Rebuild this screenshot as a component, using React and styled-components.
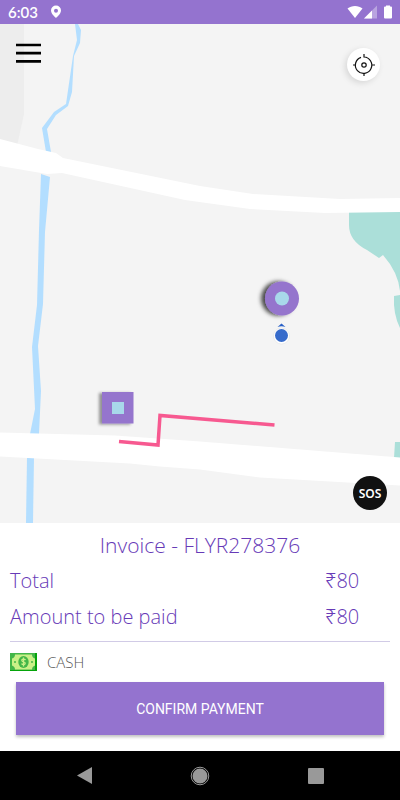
import React from 'react';
import styled, { createGlobalStyle } from 'styled-components';

const GlobalStyle = createGlobalStyle`
  * {
    box-sizing: border-box;
  }

  body {
    margin: 0;
    background: #fff;
    font-family: "Open Sans", "Noto Sans", sans-serif;
  }
`;

const Screen = styled.div`
  display: flex;
  flex-direction: column;
  min-height: 100vh;
`;

const StatusBar = styled.header`
  display: flex;
  align-items: center;
  justify-content: space-between;
  height: 24px;
  padding: 0 8px;
  background: #9473cf;
  color: #fff;
`;

const StatusGroup = styled.div`
  display: flex;
  align-items: center;
  gap: ${({ gap }) => gap};
`;

const Clock = styled.time`
  font-family: Lato, sans-serif;
  font-size: 15px;
  font-weight: 600;
  line-height: 24px;
`;

const MapArea = styled.main`
  position: relative;
  flex: 1;
  min-height: 300px;
  background: #f4f4f4;
`;

const MapCanvas = styled.svg`
  position: absolute;
  width: 100%;
  height: 100%;
`;

const MapButton = styled.button`
  position: absolute;
  display: flex;
  align-items: center;
  justify-content: center;
  width: ${({ size }) => size};
  height: ${({ size }) => size};
  padding: 0;
  border: 0;
  border-radius: 50%;
  background: none;
`;

const MenuButton = styled(MapButton)`
  top: 13px;
  left: 12px;
`;

const LocateButton = styled(MapButton)`
  top: 24px;
  right: 20px;
  background: #fff;
  box-shadow: -2px 2px 6px rgba(0, 0, 0, .12);
`;

const SosButton = styled(MapButton)`
  right: 13px;
  bottom: 13px;
  background: #111;
  color: #fff;
  font-family: "Noto Sans", sans-serif;
  font-size: 12px;
  font-weight: 600;
`;

const Sheet = styled.section`
  padding: 4px 10px 16px;
  background: #fff;
  color: #673ab7;
`;

const Title = styled.h1`
  margin: 0;
  font-size: 21px;
  font-weight: 300;
  line-height: 36px;
  text-align: center;
`;

const Row = styled.div`
  display: flex;
  justify-content: space-between;
  padding-right: 30px;
  font-size: 20px;
  font-weight: 300;
  line-height: 36px;
`;

const Amount = styled.span`
  min-width: 35px;
`;

const Method = styled.div`
  display: flex;
  align-items: center;
  gap: 10px;
  height: 41px;
  margin-top: 6px;
  border-top: 1px solid #d1cbe6;
  color: #555;
  font-size: 15px;
  font-weight: 300;
`;

const ConfirmButton = styled.button`
  display: block;
  width: calc(100% - 12px);
  height: 53px;
  margin: 0 6px;
  padding: 0;
  border: 0;
  background: #9473cf;
  box-shadow: 0 2px 3px rgba(0, 0, 0, .25);
  color: #fff;
  font-family: Roboto, sans-serif;
  font-size: 14px;
`;

const NavBar = styled.nav`
  display: grid;
  grid-template-columns: repeat(3, 116px);
  justify-content: center;
  height: 49px;
  background: #000;
`;

const NavButton = styled.button`
  display: flex;
  align-items: center;
  justify-content: center;
  padding: 0;
  border: 0;
  background: none;
`;

const PinIcon = () => (
  <svg width="12" height="14" viewBox="0 0 12 14">
    <path d="M6 0.5a5 5 0 0 0-5 5C1 9 6 13 6 13s5-4 5-7.500a5 5 0 0 0-5-5zm0 3.200a2 2 0 1 1 0 4 2 2 0 0 1 0-4z" fill="#fff" fillRule="evenodd" />
  </svg>
);

const SignalIcons = () => (
  <svg width="46" height="14" viewBox="0 0 46 14">
    <path d="M1.500 3.500C5.500 0 12.500 0 16.500 3.500L9 13z" fill="#fff" />
    <path d="M31 0.500V13.500H18z" fill="#fff" opacity=".35" />
    <path d="M26 5.500V13.500H18z" fill="#fff" />
    <path d="M40 .5h4v1h1q1 0 1 1v10q0 1-1 1h-6q-1 0-1-1v-10q0-1 1-1h1z" fill="#fff" />
  </svg>
);

const MenuIcon = () => (
  <svg width="25" height="20" viewBox="0 0 25 20">
    <path d="M0 2h25M0 10.200h25M0 18.400h25" stroke="#000" strokeWidth="2.700" />
  </svg>
);

const LocateIcon = () => (
  <svg width="22" height="22" viewBox="0 0 22 22" fill="none" stroke="#111" strokeWidth="1.200">
    <path d="M11 0v3A8.200 8.200 0 1 1 8 3.400M0 11h3M19 11h3M11 19v3" />
    <circle cx="11" cy="11" r="2.200" />
  </svg>
);

const CashIcon = () => (
  <svg width="27" height="18" viewBox="0 0 27 18">
    <path d="M0 0h27v18H0z" fill="#43b649" />
    <path d="M25 0h2v18H0v-1h25z" fill="#05a40a" />
    <path d="M5 1.500h17q0 3 3 4v7q-3 1-3 4H5q0-3-3-4v-7q3-1 3-4z" fill="#c9f087" />
    <ellipse cx="13.500" cy="9" rx="5.200" ry="6" fill="#43b649" />
    <circle cx="5" cy="9" r="1" fill="#43b649" />
    <circle cx="22" cy="9" r="1" fill="#43b649" />
    <path d="M15.500 7q-1-1.200-2.500-.8c-2 .6-1.300 2.300.5 2.700 2 .4 2.400 2 .5 2.700q-1.500.3-2.500-.9M13.500 4.500v9" fill="none" stroke="#c9f087" strokeWidth="1.300" />
  </svg>
);

const StreetMap = () => (
  <MapCanvas viewBox="0 24 400 499" preserveAspectRatio="xMidYMid slice" aria-hidden="true">
    <defs>
      <filter id="shadow" x="-50%" y="-50%" width="200%" height="200%">
        <feDropShadow dx="-4" dy="0" stdDeviation="2" floodOpacity=".7" />
      </filter>
      <filter id="softShadow" x="-50%" y="-50%" width="200%" height="200%">
        <feDropShadow dx="-3" dy="1" stdDeviation="1.500" floodOpacity=".4" />
      </filter>
    </defs>
    <path d="M0 24h24v90l-7 32H0z" fill="#ededed" />
    <g fill="#b3deff">
      <path d="M75 24h3l3 6-1 13-6 13-2 36-4 14-12 9-9 14 4 23h-5l-4-24 12-16 12-8 7-48 4-16z" />
      <path d="M41 174l9 3-5 55-2 72-5 42 3 45-2 43h-9l5-25-3-62 5-42 2-75z" />
      <path d="M27 457h7l-1 66h-7z" />
    </g>
    <g fill="#abdfd9">
      <path d="M349 205h51v86q-2-19-17-36l-4 3-12-8q-18-9-18-25z" />
      <path d="M394 296l6-1v33q-7-14-6-32zM395 442h5v16h-6z" />
    </g>
    <path d="M0 139l38 10 18 4 7 5 137 28 53 8 87 5 60-1v14l-75 1-75-4-65-9L62 173l-15 1-47-8z" fill="#fff" />
    <path d="M0 432.500l115 3 85 6 200 16v28l-140-8-60-8-40-3-30-3-130-7z" fill="#fff" />
    <path d="M119 441.500l39 3.500 2-29.500 114.500 9.500" fill="none" stroke="#f75990" strokeWidth="3.500" />
    <path d="M102 392h31.500v31.500H102z" fill="#9575cd" filter="url(#softShadow)" />
    <path d="M112 402h12v12h-12z" fill="#a8d8ea" />
    <circle cx="282" cy="298.500" r="17" fill="#9575cd" filter="url(#shadow)" />
    <circle cx="282" cy="298.500" r="7" fill="#a8d8ea" />
    <circle cx="281.500" cy="336" r="8" fill="#fff" stroke="#ddd" strokeWidth=".5" />
    <circle cx="281.500" cy="335.500" r="6.500" fill="#366bcb" />
    <path d="M277.500 327l4-3.500 4 3.500q-4-1.500-8 0z" fill="#2860c7" />
  </MapCanvas>
);

const App = () => {
  return (
    <Screen>
      <GlobalStyle />
      <StatusBar>
        <StatusGroup gap="12px">
          <Clock>6:03</Clock>
          <PinIcon />
        </StatusGroup>
        <SignalIcons />
      </StatusBar>
      <MapArea>
        <StreetMap />
        <MenuButton size="32px" aria-label="Menu"><MenuIcon /></MenuButton>
        <LocateButton size="33px" aria-label="My location"><LocateIcon /></LocateButton>
        <SosButton size="34px">SOS</SosButton>
      </MapArea>
      <Sheet>
        <Title>Invoice - FLYR278376</Title>
        <Row>
          <span>Total</span>
          <Amount>₹80</Amount>
        </Row>
        <Row>
          <span>Amount to be paid</span>
          <Amount>₹80</Amount>
        </Row>
        <Method>
          <CashIcon />
          <span>CASH</span>
        </Method>
        <ConfirmButton>CONFIRM PAYMENT</ConfirmButton>
      </Sheet>
      <NavBar>
        <NavButton aria-label="Back">
          <svg width="15" height="17" viewBox="0 0 15 17">
            <path d="M15 0v17L0 8.500z" fill="#999" />
          </svg>
        </NavButton>
        <NavButton aria-label="Home">
          <svg width="20" height="20" viewBox="0 0 20 20">
            <circle cx="10" cy="10" r="8.800" fill="none" stroke="#999" />
            <circle cx="10" cy="10" r="7.500" fill="#999" />
          </svg>
        </NavButton>
        <NavButton aria-label="Recent apps">
          <svg width="16" height="16" viewBox="0 0 16 16">
            <rect width="16" height="16" rx="1" fill="#999" />
          </svg>
        </NavButton>
      </NavBar>
    </Screen>
  );
}

export default App;
